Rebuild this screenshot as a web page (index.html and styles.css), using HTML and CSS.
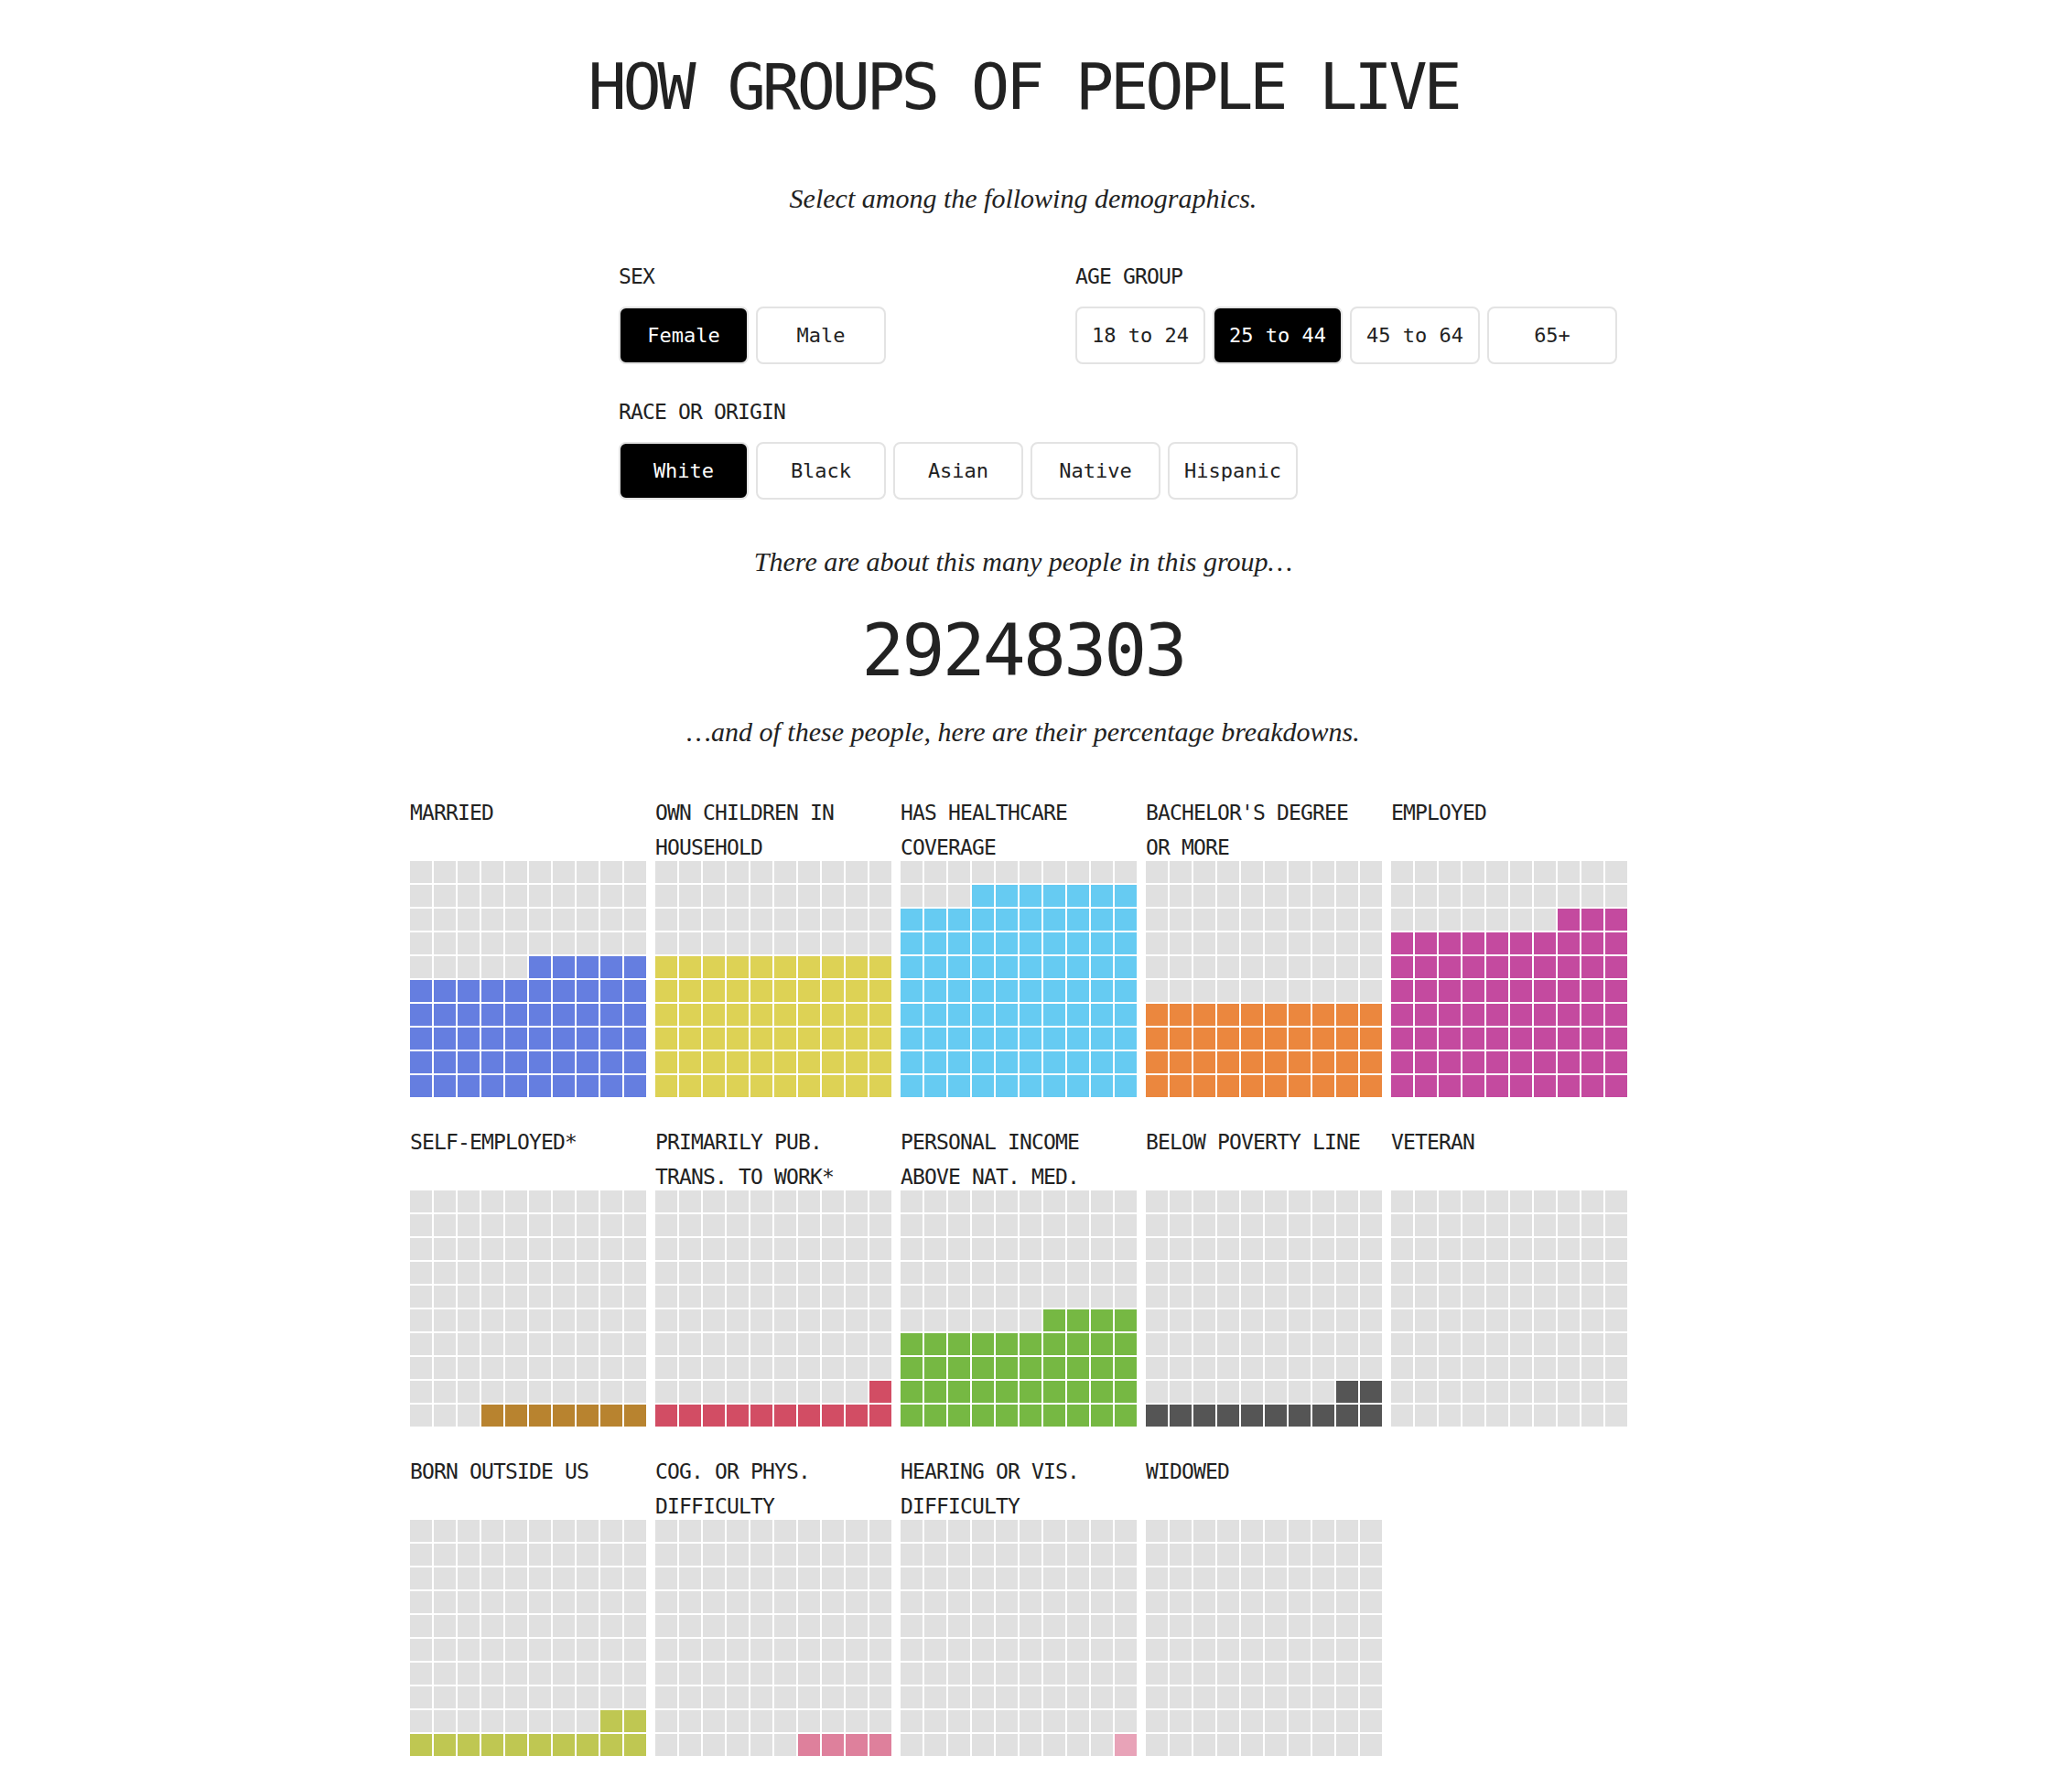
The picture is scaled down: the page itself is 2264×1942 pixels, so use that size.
FILE: index.html
```html
<!DOCTYPE html>
<html lang="en">
<head>
<meta charset="utf-8">
<title>How Groups of People Live</title>
<link rel="stylesheet" href="styles.css">
</head>
<body>
<main class="page">
  <h1 class="title">HOW GROUPS OF PEOPLE LIVE</h1>
  <p class="note note-lead">Select among the following demographics.</p>

  <section class="controls">
    <div class="group group-sex">
      <div class="group-label">SEX</div>
      <div class="options">
        <button class="opt is-active">Female</button>
        <button class="opt">Male</button>
      </div>
    </div>
    <div class="group group-age">
      <div class="group-label">AGE GROUP</div>
      <div class="options">
        <button class="opt">18 to 24</button>
        <button class="opt is-active">25 to 44</button>
        <button class="opt">45 to 64</button>
        <button class="opt">65+</button>
      </div>
    </div>
    <div class="group group-race">
      <div class="group-label">RACE OR ORIGIN</div>
      <div class="options">
        <button class="opt is-active">White</button>
        <button class="opt">Black</button>
        <button class="opt">Asian</button>
        <button class="opt">Native</button>
        <button class="opt">Hispanic</button>
      </div>
    </div>
  </section>

  <p class="note note-count">There are about this many people in this group…</p>
  <div class="count">29248303</div>
  <p class="note note-break">…and of these people, here are their percentage breakdowns.</p>

  <section class="charts">
    <div class="chart c-married" data-pct="55"><div class="chart-label">MARRIED</div><div class="waffle"></div></div>
    <div class="chart c-children" data-pct="60"><div class="chart-label">OWN CHILDREN IN HOUSEHOLD</div><div class="waffle"></div></div>
    <div class="chart c-health" data-pct="87"><div class="chart-label">HAS HEALTHCARE COVERAGE</div><div class="waffle"></div></div>
    <div class="chart c-degree" data-pct="40"><div class="chart-label">BACHELOR'S DEGREE OR MORE</div><div class="waffle"></div></div>
    <div class="chart c-employed" data-pct="73"><div class="chart-label">EMPLOYED</div><div class="waffle"></div></div>
    <div class="chart c-self" data-pct="7"><div class="chart-label">SELF-EMPLOYED*</div><div class="waffle"></div></div>
    <div class="chart c-transit" data-pct="11"><div class="chart-label">PRIMARILY PUB. TRANS. TO WORK*</div><div class="waffle"></div></div>
    <div class="chart c-income" data-pct="44"><div class="chart-label">PERSONAL INCOME ABOVE NAT. MED.</div><div class="waffle"></div></div>
    <div class="chart c-poverty" data-pct="12"><div class="chart-label">BELOW POVERTY LINE</div><div class="waffle"></div></div>
    <div class="chart c-veteran" data-pct="0"><div class="chart-label">VETERAN</div><div class="waffle"></div></div>
    <div class="chart c-born" data-pct="12"><div class="chart-label">BORN OUTSIDE US</div><div class="waffle"></div></div>
    <div class="chart c-cog" data-pct="4"><div class="chart-label">COG. OR PHYS. DIFFICULTY</div><div class="waffle"></div></div>
    <div class="chart c-hearing" data-pct="1"><div class="chart-label">HEARING OR VIS. DIFFICULTY</div><div class="waffle"></div></div>
    <div class="chart c-widowed" data-pct="0"><div class="chart-label">WIDOWED</div><div class="waffle"></div></div>
  </section>
</main>
<script src="script.js"></script>
</body>
</html>
```

FILE: styles.css
```css
html, body {
  margin: 0;
  background: #ffffff;
}

body {
  color: #222222;
  font-family: "DejaVu Sans Mono", "Liberation Mono", monospace;
}

.page {
  width: 1340px;
  margin-left: 448px;
  padding-top: 45px;
  padding-bottom: 40px;
}

.title {
  margin: 0;
  text-align: center;
  font-weight: normal;
  font-size: 70px;
  letter-spacing: -4.1px;
  line-height: 100px;
  color: #222222;
}

.note {
  margin: 0;
  text-align: center;
  font-family: "Liberation Serif", "Times New Roman", serif;
  font-style: italic;
  font-size: 30px;
  line-height: 40px;
  color: #222222;
}

.note-lead {
  margin-top: 52px;
}

.controls {
  display: flex;
  flex-wrap: wrap;
  width: 1100px;
  margin-top: 50px;
  margin-left: 228px;
}

.group-sex {
  width: 499px;
}

.group-race {
  width: 100%;
  margin-top: 37px;
}

.group-label {
  font-size: 23px;
  letter-spacing: -0.85px;
  line-height: 30px;
  color: #222222;
}

.options {
  display: flex;
  gap: 8px;
  margin-top: 18px;
}

.opt {
  box-sizing: border-box;
  width: 142px;
  height: 63px;
  padding: 0;
  border: 2px solid #e3e3e3;
  border-radius: 8px;
  background: #ffffff;
  color: #222222;
  font-family: "DejaVu Sans Mono", monospace;
  font-size: 22px;
}

.opt.is-active {
  background: #000000;
  color: #ffffff;
}

.note-count {
  margin-top: 48px;
}

.count {
  margin-top: 32px;
  text-align: center;
  font-size: 78px;
  letter-spacing: -2.8px;
  line-height: 90px;
  color: #222222;
}

.note-break {
  margin-top: 24px;
}

.charts {
  display: flex;
  flex-wrap: wrap;
  width: 1340px;
  margin-top: 47px;
}

.chart {
  width: 258px;
  margin-right: 10px;
  margin-bottom: 28px;
  --c: #e0e0e0;
}

.chart-label {
  box-sizing: border-box;
  height: 74px;
  padding-top: 3px;
  font-size: 23px;
  letter-spacing: -0.85px;
  line-height: 37.5px;
  color: #222222;
}

.waffle {
  display: grid;
  grid-template-columns: repeat(10, 24px);
  grid-auto-rows: 24px;
  gap: 2px;
}

.cell {
  background: #e0e0e0;
}

.cell.on {
  background: var(--c);
}

.c-married  { --c: #657ee0; }
.c-children { --c: #ddd255; }
.c-health   { --c: #66cbf2; }
.c-degree   { --c: #eb873e; }
.c-employed { --c: #c44a9f; }
.c-self     { --c: #b8832f; }
.c-transit  { --c: #d24d64; }
.c-income   { --c: #76b843; }
.c-poverty  { --c: #555555; }
.c-veteran  { --c: #888888; }
.c-born     { --c: #bfc752; }
.c-cog      { --c: #de809c; }
.c-hearing  { --c: #e8a3b8; }
.c-widowed  { --c: #888888; }
```

FILE: script.js
```js
document.querySelectorAll('.chart').forEach(function (chart) {
  var n = parseInt(chart.getAttribute('data-pct'), 10) || 0;
  var waffle = chart.querySelector('.waffle');
  for (var i = 0; i < 100; i++) {
    var cell = document.createElement('span');
    cell.className = i >= 100 - n ? 'cell on' : 'cell';
    waffle.appendChild(cell);
  }
});
```
